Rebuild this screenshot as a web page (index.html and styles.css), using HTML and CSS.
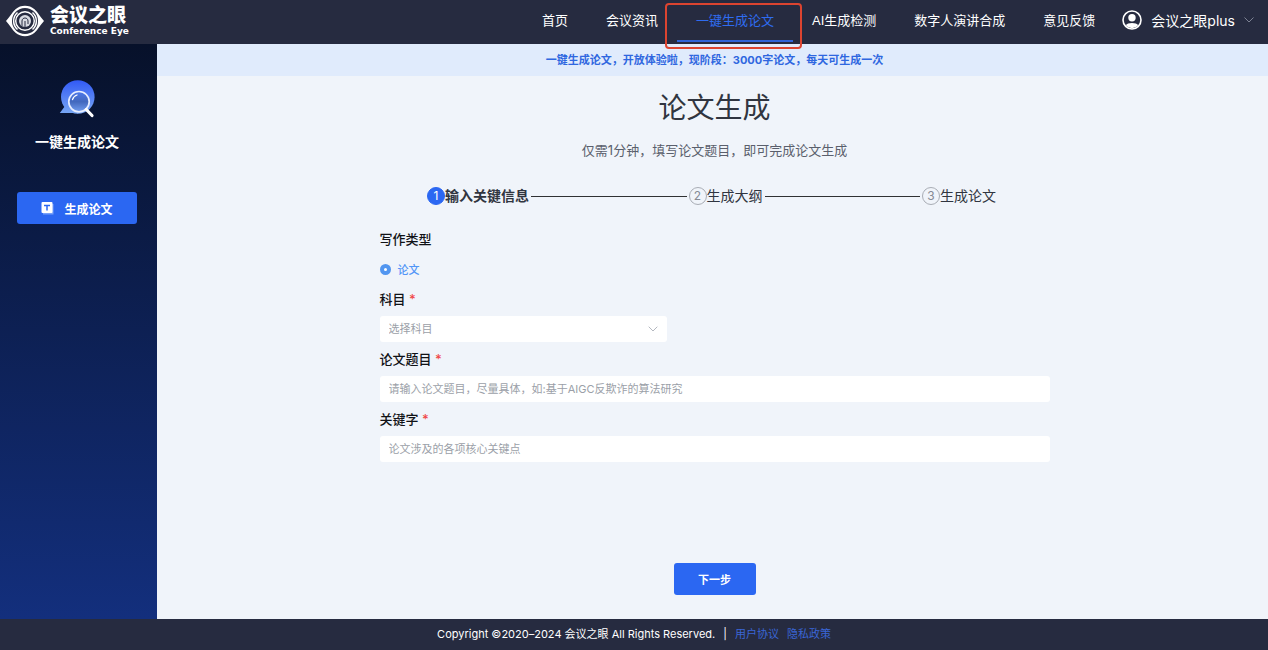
FILE: index.html
```html
<!DOCTYPE html>
<html lang="zh-CN">
<head>
<meta charset="utf-8">
<meta name="viewport" content="width=device-width, initial-scale=1">
<title>会议之眼 - 一键生成论文</title>
<link rel="stylesheet" href="styles.css">
</head>
<body>
<header class="topbar">
  <a class="logo" href="#">
    <svg class="logo-mark" viewBox="0 0 40 34" aria-hidden="true">
      <path d="M1 17C5 12.500 7 8.500 10.500 5.200a15 15 0 0 1 19 0C33 8.500 35 12.500 39 17 35 21.500 33 25.500 29.500 28.800a15 15 0 0 1-19 0C7 25.500 5 21.500 1 17Z" fill="#fff"/>
      <circle cx="20" cy="17" r="13" fill="#262b40"/>
      <path d="M12.500 8.500a11.300 11.300 0 0 0 0 17M27.500 8.500a11.300 11.300 0 0 1 0 17" fill="none" stroke="#fff" stroke-width="1.500"/>
      <circle cx="20" cy="17" r="9.300" fill="none" stroke="#fff" stroke-width="1.400"/>
      <circle cx="20" cy="17" r="6" fill="#d9dbe2"/>
      <path d="M17 22v-5c0-4 6-4 6 0v3M20 23v-6" fill="none" stroke="#262b40" stroke-width="1"/>
    </svg>
    <span class="logo-words">
      <span class="logo-cn">会议之眼</span>
      <span class="logo-en">Conference Eye</span>
    </span>
  </a>
  <nav class="nav">
    <a class="nav-item" href="#">首页</a>
    <a class="nav-item" href="#">会议资讯</a>
    <a class="nav-item active" href="#">一键生成论文</a>
    <a class="nav-item" href="#">AI生成检测</a>
    <a class="nav-item" href="#">数字人演讲合成</a>
    <a class="nav-item" href="#">意见反馈</a>
  </nav>
  <button class="user" type="button">
    <svg class="user-icon" viewBox="0 0 20 20" aria-hidden="true">
      <circle cx="10" cy="10" r="9" fill="none" stroke="#fff" stroke-width="1.600"/>
      <circle cx="10" cy="7.800" r="3.700" fill="#fff"/>
      <path d="M3.800 15.200C5.500 12.300 14.500 12.300 16.200 15.200A8 8 0 0 1 3.800 15.200Z" fill="#fff"/>
    </svg>
    <span>会议之眼plus</span>
    <svg class="user-arrow" viewBox="0 0 10 6" aria-hidden="true"><path d="M.5.5 5 5 9.500.5" fill="none" stroke="#7d8293"/></svg>
  </button>
</header>

<div class="body">
  <aside class="sidebar">
    <svg class="side-icon" viewBox="0 0 36 40" aria-hidden="true">
      <defs>
        <linearGradient id="bubble" gradientUnits="userSpaceOnUse" x1="0" y1="1" x2="0" y2="35"><stop offset="0" stop-color="#3159f5"/><stop offset="1" stop-color="#79a8f3"/></linearGradient>
        <linearGradient id="lens" x1="0" y1="0" x2="0" y2="1"><stop offset="0" stop-color="#4c78ed"/><stop offset=".5" stop-color="#4268bd"/><stop offset="1" stop-color="#729df0"/></linearGradient>
      </defs>
      <circle cx="18.800" cy="18" r="16.800" fill="url(#bubble)"/>
      <path d="M.8 34 6 27l13 1v6.800L18 34Z" fill="url(#bubble)"/>
      <circle cx="20" cy="22.700" r="10.200" fill="url(#lens)" stroke="#e6edff" stroke-width="1.700"/>
      <path d="M13.500 20.700c.6-2.200 2.200-4 4.500-4.700" fill="none" stroke="#fff" stroke-width="1.300" stroke-linecap="round"/>
      <path d="M27.300 30.500 33 36.500" stroke="#fff" stroke-width="3.200" stroke-linecap="round"/>
    </svg>
    <h2 class="side-title">一键生成论文</h2>
    <button class="side-button" type="button">
      <svg class="side-button-icon" viewBox="0 0 13 13" aria-hidden="true">
        <path d="M2 2h10.500v10.500H2z" fill="#77a0fa"/>
        <rect x=".5" width="11" height="11" rx="1" fill="#fff"/>
        <path d="M3 3.500h6M6 3.500v5" stroke="#2b67f2" stroke-width="1.500"/>
      </svg>
      <span>生成论文</span>
    </button>
  </aside>

  <main class="main">
    <p class="notice">一键生成论文，开放体验啦，现阶段：3000字论文，每天可生成一次</p>
    <div class="content">
      <h1 class="title">论文生成</h1>
      <p class="subtitle">仅需1分钟，填写论文题目，即可完成论文生成</p>
      <ol class="steps">
        <li class="step current"><span class="num">1</span>输入关键信息</li>
        <li class="line" role="presentation"></li>
        <li class="step"><span class="num">2</span>生成大纲</li>
        <li class="line" role="presentation"></li>
        <li class="step"><span class="num">3</span>生成论文</li>
      </ol>
      <form class="form">
        <fieldset class="kind">
          <legend class="label">写作类型</legend>
          <label class="radio"><input type="radio" name="kind" checked>论文</label>
        </fieldset>
        <label class="label" for="subject">科目 <span class="required">*</span></label>
        <div class="select-box">
          <select class="field" id="subject" required>
            <option value="">选择科目</option>
          </select>
          <svg class="select-arrow" viewBox="0 0 10 6" aria-hidden="true"><path d="M.7.7 5 5 9.300.7" fill="none" stroke="#b4b8c0"/></svg>
        </div>
        <label class="label" for="topic">论文题目 <span class="required">*</span></label>
        <input class="field" id="topic" type="text" placeholder="请输入论文题目，尽量具体，如:基于AIGC反欺诈的算法研究" required>
        <label class="label" for="keywords">关键字 <span class="required">*</span></label>
        <input class="field" id="keywords" type="text" placeholder="论文涉及的各项核心关键点" required>
        <button class="next" type="submit">下一步</button>
      </form>
    </div>
  </main>
</div>

<footer class="footer">
  <span>Copyright ©2020–2024 会议之眼 All Rights Reserved.</span>
  <span class="divider">|</span>
  <a href="#">用户协议</a>
  <a href="#">隐私政策</a>
</footer>
</body>
</html>
```
FILE: styles.css
```css
* {
  box-sizing: border-box;
}

body {
  margin: 0;
  min-height: 100vh;
  display: flex;
  flex-direction: column;
  font-family: Inter, "Noto Sans CJK SC", sans-serif;
  font-size: 13px;
  color: #303540;
  background: #f0f4fa;
}

h1, h2, p, ol, fieldset, legend {
  margin: 0;
  padding: 0;
  border: 0;
}

a {
  text-decoration: none;
}

button, input, select {
  font: inherit;
}

button {
  border: 0;
  cursor: pointer;
}

.topbar {
  height: 44px;
  display: flex;
  align-items: center;
  padding: 0 14px 0 5px;
  background: #262b40;
  color: #fff;
}

.logo {
  display: flex;
  align-items: center;
  gap: 5px;
  margin-right: auto;
  padding-bottom: 2px;
  color: #fff;
}

.logo-mark {
  width: 40px;
  height: 34px;
}

.logo-words {
  display: flex;
  flex-direction: column;
}

.logo-cn {
  font-size: 19px;
  line-height: 20px;
  font-weight: 900;
}

.logo-en {
  font-family: "DejaVu Sans", sans-serif;
  font-size: 9px;
  line-height: 10px;
  font-weight: 700;
}

.nav {
  display: flex;
  align-self: stretch;
}

.nav-item {
  position: relative;
  display: flex;
  align-items: center;
  padding: 0 19px 6px;
  color: #fff;
  font-family: "Liberation Sans", "Noto Sans CJK SC", sans-serif;
  white-space: nowrap;
}

.nav-item.active {
  color: #2f6cf0;
}

.nav-item.active::before {
  content: "";
  position: absolute;
  inset: auto 0 2px;
  height: 2px;
  background: #2f62d8;
}

.nav-item.active::after {
  content: "";
  position: absolute;
  inset: 3px -9px -5px -12px;
  border: 2px solid #dc4430;
  border-radius: 4px;
}

.user {
  display: flex;
  align-items: center;
  gap: 9px;
  margin-left: 8px;
  padding: 0 0 4px;
  color: #fff;
  background: none;
  font-size: 14px;
}

.user-icon {
  width: 20px;
  height: 20px;
}

.user-arrow {
  width: 10px;
  height: 6px;
}

.body {
  flex: 1;
  display: flex;
}

.sidebar {
  width: 157px;
  flex: none;
  display: flex;
  flex-direction: column;
  align-items: center;
  padding: 35px 20px 20px 17px;
  background: linear-gradient(#07112a, #132f7d);
  color: #fff;
}

.side-icon {
  width: 36px;
  height: 40px;
}

.side-title {
  margin-top: 12px;
  font-size: 14px;
  line-height: 22px;
  font-weight: 700;
}

.side-button {
  width: 100%;
  height: 32px;
  display: flex;
  align-items: center;
  justify-content: center;
  gap: 10px;
  margin-top: 39px;
  border-radius: 3px;
  color: #fff;
  background: #2b67f2;
  font-size: 12px;
  font-weight: 700;
}

.side-button-icon {
  width: 13px;
  height: 13px;
}

.main {
  flex: 1;
  min-width: 0;
}

.notice {
  padding: 0 0 0 4px;
  color: #2f67e0;
  background: #e0ebfc;
  font-size: 11px;
  line-height: 32px;
  font-weight: 700;
  text-align: center;
}

.content {
  display: flex;
  flex-direction: column;
  align-items: center;
  padding: 12px 20px 24px 24px;
}

.title {
  font-size: 28px;
  line-height: 40px;
  font-weight: 400;
}

.subtitle {
  margin-top: 12px;
  line-height: 20px;
  color: #5a5f6c;
}

.steps {
  width: 100%;
  max-width: 575px;
  display: flex;
  align-items: center;
  gap: 2px;
  margin-top: 26px;
  padding-right: 6px;
  list-style: none;
  font-size: 14px;
  line-height: 20px;
}

.step {
  display: flex;
  align-items: center;
  white-space: nowrap;
}

.step.current {
  font-weight: 700;
}

.num {
  width: 18px;
  height: 18px;
  display: grid;
  place-items: center;
  border: 1px solid #a9adb5;
  border-radius: 50%;
  color: #858a94;
  font-size: 12px;
  line-height: 16px;
}

.current .num {
  border-color: #2b67f2;
  background: #2b67f2;
  color: #fff;
  font-weight: 400;
}

.line {
  flex: 1;
  height: 1px;
  background: #303133;
}

.form {
  width: 100%;
  max-width: 670px;
  display: flex;
  flex-direction: column;
  margin-top: 16px;
}

.label {
  display: block;
  line-height: 34px;
  color: #101216;
  font-weight: 500;
}

.required {
  color: #f04848;
}

.radio {
  height: 26px;
  display: flex;
  align-items: center;
  gap: 7px;
  color: #5296f7;
  font-size: 11px;
  font-weight: 500;
}

.radio input {
  appearance: none;
  width: 11px;
  height: 11px;
  margin: 0;
  border: 4px solid #5296f0;
  border-radius: 50%;
  background: #fff;
}

.field {
  width: 100%;
  height: 26px;
  padding: 0 9px;
  border: 0;
  border-radius: 3px;
  background: #fff;
  color: #9b9fa8;
  font-size: 11px;
}

.field::placeholder {
  color: #9b9fa8;
  opacity: 1;
}

.select-box {
  display: grid;
  align-items: center;
  width: 100%;
  max-width: 287px;
}

.select-box > * {
  grid-area: 1 / 1;
}

.select-box select {
  appearance: none;
}

.select-arrow {
  width: 10px;
  height: 6px;
  justify-self: end;
  margin-right: 9px;
  pointer-events: none;
}

.next {
  align-self: center;
  width: 82px;
  height: 32px;
  margin-top: 101px;
  border-radius: 3px;
  color: #fff;
  background: #2b67f2;
  font-size: 11px;
  font-weight: 700;
}

.footer {
  display: flex;
  justify-content: center;
  gap: 8px;
  background: #262b40;
  color: #fff;
  font-size: 11px;
  line-height: 31px;
}

.footer a {
  color: #3a66d6;
}
```
